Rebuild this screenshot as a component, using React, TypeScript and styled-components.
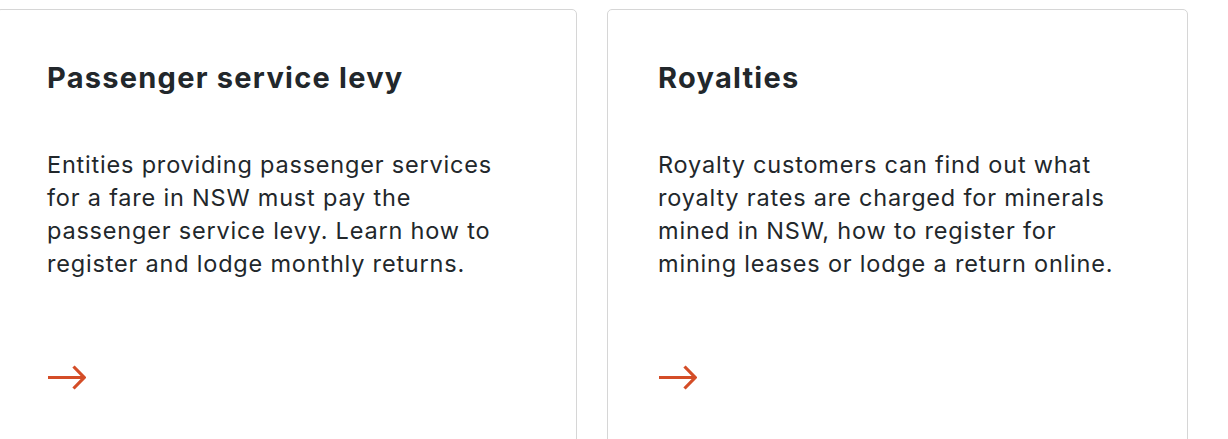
import React from "react";
import styled, { createGlobalStyle } from "styled-components";

const GlobalStyle = createGlobalStyle`
  html, body {
    margin: 0;
    padding: 0;
    background: #ffffff;
    overflow: hidden;
  }
  body {
    font-family: Inter, "Noto Sans", Arial, sans-serif;
    color: #22272b;
  }
`;

const Grid = styled.div`
  display: flex;
  gap: 30px;
  margin-left: -4px;
  padding-top: 9px;
`;

const Card = styled.a`
  box-sizing: border-box;
  display: flex;
  flex-direction: column;
  width: 581px;
  height: 470px;
  padding: 50px 40px 0 50px;
  border: 1px solid #d6d6d6;
  border-radius: 5px;
  background: #ffffff;
  text-decoration: none;
  color: inherit;
`;

const Title = styled.h2`
  margin: 0;
  font-size: 29px;
  line-height: 36px;
  font-weight: 700;
  color: #22272b;
  letter-spacing: 1.25px;
`;

const Body = styled.p`
  margin: 52px 0 0 0;
  max-width: 482px;
  font-size: 23.5px;
  line-height: 33px;
  font-weight: 400;
  color: #22272b;
  letter-spacing: 0.8px;
`;

const ArrowWrap = styled.div`
  margin: 85px 0 0 1px;
  width: 38px;
  height: 25px;
  display: flex;
`;

const Arrow = () => (
  <svg width="38" height="25" viewBox="0 0 38 25" fill="none">
    <path d="M0 12.5H36" stroke="#d44d27" strokeWidth="3.2" />
    <path d="M25.5 1.5L36.2 12.5L25.5 23.5" stroke="#d44d27" strokeWidth="3.2" strokeLinejoin="miter" />
  </svg>
);

const cards = [
  {
    title: "Passenger service levy",
    body: "Entities providing passenger services for a fare in NSW must pay the passenger service levy. Learn how to register and lodge monthly returns.",
  },
  {
    title: "Royalties",
    body: "Royalty customers can find out what royalty rates are charged for minerals mined in NSW, how to register for mining leases or lodge a return online.",
  },
];

export default function App() {
  return (
    <>
      <GlobalStyle />
      <Grid>
        {cards.map((c) => (
          <Card key={c.title} href="#">
            <Title>{c.title}</Title>
            <Body>{c.body}</Body>
            <ArrowWrap>
              <Arrow />
            </ArrowWrap>
          </Card>
        ))}
      </Grid>
    </>
  );
}
